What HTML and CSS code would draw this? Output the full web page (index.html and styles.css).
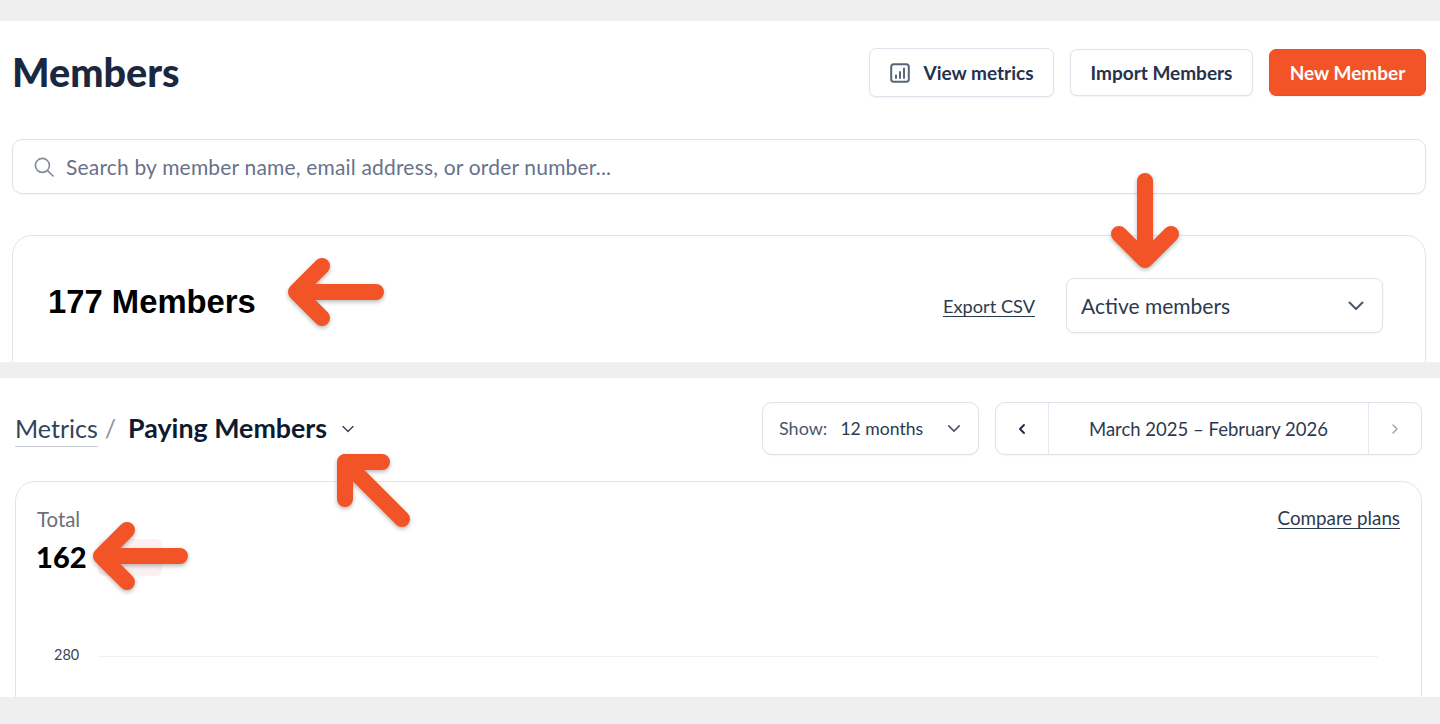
FILE: index.html
```html
<!DOCTYPE html>
<html lang="en">
<head>
<meta charset="utf-8">
<title>Members</title>
<link rel="stylesheet" href="styles.css">
</head>
<body>
<section class="panel panel-members">
  <header class="page-head">
    <h1 class="page-title">Members</h1>
    <div class="actions">
      <button class="btn btn-metrics">
        <svg class="btn-icon" viewBox="0 0 20 20" fill="none" stroke="currentColor" stroke-width="2" stroke-linecap="round"><rect x="1.2" y="1.2" width="17.6" height="17.6" rx="2.5"/><path d="M6 15v-2.5M10 15V9M14 15V5.5"/></svg>
        View metrics
      </button>
      <button class="btn btn-import">Import Members</button>
      <button class="btn btn-primary">New Member</button>
    </div>
  </header>
  <div class="search">
    <svg class="search-icon" viewBox="0 0 20 20" fill="none" stroke="currentColor" stroke-width="1.6" stroke-linecap="round"><circle cx="8.4" cy="8.4" r="7"/><path d="M13.6 13.6l5.4 5.4"/></svg>
    <span>Search by member name, email address, or order number...</span>
  </div>
  <div class="card card-members">
    <h2 class="count">177 Members</h2>
    <div class="card-tools">
      <a class="link export" href="#">Export CSV</a>
      <div class="select select-active">
        <span>Active members</span>
        <svg class="chev" viewBox="0 0 16 10" fill="none" stroke="currentColor" stroke-width="2" stroke-linecap="round" stroke-linejoin="round"><path d="M1.5 1.5L8 8l6.5-6.5"/></svg>
      </div>
    </div>
  </div>
</section>

<section class="panel panel-metrics">
  <header class="metrics-head">
    <div class="crumbs">
      <a class="crumb-root" href="#">Metrics</a>
      <span class="crumb-sep">/</span>
      <strong class="crumb-current">Paying Members</strong>
      <svg class="crumb-chev" viewBox="0 0 12 8" fill="none" stroke="currentColor" stroke-width="1.3" stroke-linecap="round" stroke-linejoin="round"><path d="M1 1.5L6 6.5l5-5"/></svg>
    </div>
    <div class="metrics-tools">
      <div class="select select-show">
        <span class="show-label">Show:</span>
        <span class="show-value">12 months</span>
        <svg class="chev" viewBox="0 0 16 10" fill="none" stroke="currentColor" stroke-width="1.8" stroke-linecap="round" stroke-linejoin="round"><path d="M2 2l6 6 6-6"/></svg>
      </div>
      <div class="pager">
        <span class="pager-btn"><svg viewBox="0 0 8 12" fill="none" stroke="currentColor" stroke-width="1.9" stroke-linecap="round" stroke-linejoin="round"><path d="M6 2L2 6l4 4"/></svg></span>
        <span class="pager-range">March 2025 – February 2026</span>
        <span class="pager-btn pager-next"><svg viewBox="0 0 8 12" fill="none" stroke="currentColor" stroke-width="1.4" stroke-linecap="round" stroke-linejoin="round"><path d="M2 2l4 4-4 4"/></svg></span>
      </div>
    </div>
  </header>
  <div class="card card-chart">
    <div class="chart-head">
      <div>
        <div class="total-label">Total</div>
        <div class="total-row"><span class="total-value">162</span><span class="total-badge"></span></div>
      </div>
      <a class="link link-compare" href="#">Compare plans</a>
    </div>
    <div class="axis-row">
      <span class="axis-label">280</span>
      <span class="axis-line"></span>
    </div>
  </div>
</section>

<svg class="arrows" width="1440" height="724" viewBox="0 0 1440 724" fill="none" stroke="#f25327" stroke-width="16" stroke-linecap="round" stroke-linejoin="round">
  <path d="M376 292H296M322 266L296 292L322 318"/>
  <path d="M1145 181V260M1119 234L1145 260L1171 234"/>
  <path d="M402 519L345 462M382 462H345V499"/>
  <path d="M180 556H101M127 530L101 556L127 582"/>
</svg>
</body>
</html>
```
FILE: styles.css
```css
* { box-sizing: border-box; }
html, body { margin: 0; }
body {
  position: relative;
  width: 1440px;
  height: 724px;
  overflow: hidden;
  padding-top: 21px;
  background: #efefef;
  font-family: "Lato", "Open Sans", sans-serif;
  color: #2c3a50;
}
.panel { background: #fff; overflow: hidden; }
.panel-members { height: 341px; padding: 27px 14px 0 12px; }
.panel-metrics { height: 319px; margin-top: 16px; padding: 24px 18px 0 15px; }

.page-head { display: flex; justify-content: space-between; align-items: center; height: 49px; }
.page-title { margin: 0 0 2px; font-size: 39.5px; font-weight: 900; color: #1a2740; }
.actions { display: flex; align-items: center; gap: 16px; }
.btn {
  display: flex; align-items: center; justify-content: center;
  height: 47px; padding: 0;
  border: 1px solid #dfe2ea; border-radius: 7px;
  background: #fff; color: #25324a;
  font: 700 19px "Lato", sans-serif;
  box-shadow: 0 1px 2px rgba(30, 40, 70, .06);
}
.btn-metrics { width: 185px; height: 49px; gap: 14px; }
.btn-icon { width: 20px; height: 20px; color: #5a6579; }
.btn-import { width: 183px; }
.btn-primary { width: 157px; background: #f25327; border-color: #f04c1e; color: #fff; }

.search {
  display: flex; align-items: center; gap: 12px;
  height: 55px; margin-top: 42px; padding-left: 21px;
  border: 1px solid #dfe2ea; border-radius: 10px;
  color: #68728a; font-size: 21px; letter-spacing: .18px;
  box-shadow: 0 1px 2px rgba(30, 40, 70, .05);
}
.search-icon { width: 20px; height: 20px; color: #828b9c; flex: none; }

.card { border: 1px solid #e2e4ec; border-radius: 20px; background: #fff; }
.card-members {
  display: flex; justify-content: space-between;
  height: 180px; margin-top: 41px; padding: 42px 42px 0 35px;
}
.count { margin: 5px 0 0; font: 700 32.8px "Liberation Sans", Arial, sans-serif; color: #000; }
.card-tools { display: flex; align-items: flex-start; gap: 31px; }
.link { color: #2c3a50; font-size: 18.2px; text-decoration: underline; text-underline-offset: 3px; }
.export { margin-top: 17px; }
.select {
  display: flex; align-items: center;
  border: 1px solid #dfe2ea; border-radius: 8px; background: #fff;
  box-shadow: 0 1px 2px rgba(30, 40, 70, .05);
}
.select-active {
  justify-content: space-between;
  width: 317px; height: 55px;
  padding: 0 18px 0 14px;
  font-size: 21px; color: #2c3a50;
}
.chev { width: 16px; height: 10px; color: #4b566a; }

.metrics-head { display: flex; justify-content: space-between; align-items: flex-start; height: 79px; }
.crumbs { display: flex; align-items: center; height: 51px; }
.crumb-root { color: #34435c; font-size: 25px; text-decoration: none; border-bottom: 1px solid #c9cdd6; line-height: 33px; margin-top: 4px; padding-bottom: 1px; }
.crumb-sep { margin-left: 7px; color: #8d95a5; font-size: 25px; }
.crumb-current { margin-left: 12px; color: #0e1a30; font-size: 26.8px; font-weight: 700; }
.crumb-chev { width: 12px; height: 8px; margin-left: 15px; margin-top: 2px; color: #333d50; }
.metrics-tools { display: flex; gap: 16px; }
.select-show { width: 217px; height: 53px; padding: 0 17px 1px 16px; border-radius: 10px; font-size: 18px; color: #2c3a50; }
.show-label { color: #4c566a; }
.show-value { margin-left: 13px; font-size: 17.6px; }
.select-show .chev { margin-left: auto; width: 14px; height: 9px; margin-top: 1px; }
.pager {
  display: flex; align-items: stretch;
  width: 427px; height: 53px;
  border: 1px solid #dfe2ea; border-radius: 10px;
  box-shadow: 0 1px 2px rgba(30, 40, 70, .05);
  font-size: 18.5px; color: #2c3a50;
}
.pager-btn { display: flex; align-items: center; justify-content: center; width: 52px; color: #1f2a3d; }
.pager-btn svg { width: 8px; height: 12px; }
.pager-next { color: #9aa1ae; }
.pager-range {
  flex: 1; display: flex; align-items: center; justify-content: center;
  border-left: 1px solid #e6e8ee; border-right: 1px solid #e6e8ee;
}

.card-chart { height: 260px; padding: 25px 21px 0 20px; }
.chart-head { display: flex; justify-content: space-between; align-items: flex-start; padding-right: 0; }
.link-compare { font-size: 18.8px; margin-top: -1px; }
.total-label { color: #6b6f78; font-size: 20.4px; line-height: 24px; margin-left: 1px; }
.total-row { display: flex; align-items: center; margin-top: 7px; }
.total-value { color: #000; font-size: 29px; font-weight: 900; line-height: 38px; letter-spacing: .1px; }
.total-badge { width: 64px; height: 37px; margin-left: 11px; border-radius: 6px; background: #fdf0f0; }
.axis-row { display: flex; align-items: center; margin: 70px 22px 0 18px; }
.axis-label { width: 44px; color: #3f4450; font-size: 14.5px; }
.axis-line { flex: 1; height: 1px; margin-top: 4px; background: #eff0f4; }

.arrows { position: absolute; left: 0; top: 0; pointer-events: none; filter: drop-shadow(0 2px 2px rgba(0, 0, 0, .28)); }
```
